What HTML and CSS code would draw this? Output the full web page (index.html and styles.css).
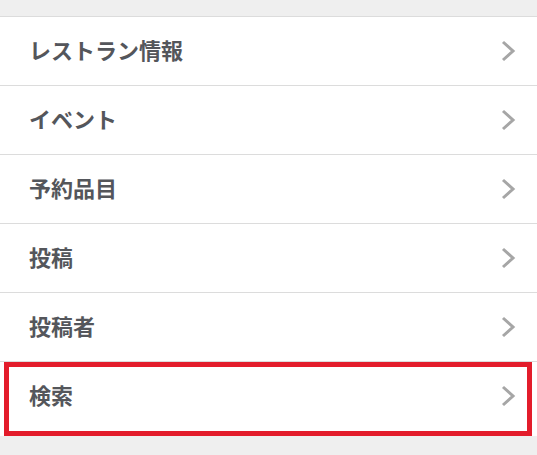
FILE: index.html
```html
<!DOCTYPE html>
<html lang="ja">
<head>
<meta charset="utf-8">
<link rel="stylesheet" href="styles.css">
</head>
<body>
<div class="page">
  <ul class="menu">
    <li class="item"><span class="label">レストラン情報</span><svg class="chev" viewBox="0 0 16 22"><path d="M3 2 L13 11 L3 20"/></svg></li>
    <li class="item"><span class="label">イベント</span><svg class="chev" viewBox="0 0 16 22"><path d="M3 2 L13 11 L3 20"/></svg></li>
    <li class="item"><span class="label">予約品目</span><svg class="chev" viewBox="0 0 16 22"><path d="M3 2 L13 11 L3 20"/></svg></li>
    <li class="item"><span class="label">投稿</span><svg class="chev" viewBox="0 0 16 22"><path d="M3 2 L13 11 L3 20"/></svg></li>
    <li class="item"><span class="label">投稿者</span><svg class="chev" viewBox="0 0 16 22"><path d="M3 2 L13 11 L3 20"/></svg></li>
    <li class="item item-highlight"><span class="label">検索</span><svg class="chev" viewBox="0 0 16 22"><path d="M3 2 L13 11 L3 20"/></svg><span class="mark"></span></li>
  </ul>
</div>
</body>
</html>
```
FILE: styles.css
```css
html, body {
  margin: 0;
  padding: 0;
  background: #efefef;
}
.page {
  padding-top: 16px;
  font-family: "Noto Sans CJK JP", "Noto Sans", sans-serif;
}
.menu {
  list-style: none;
  margin: 0;
  padding: 0 0 6px 0;
  background: #fff;
  border-top: 1px solid #dcdcdc;
}
.item {
  position: relative;
  height: 68px;
  display: flex;
  align-items: center;
  justify-content: space-between;
  padding: 0 21px 0 29px;
  border-bottom: 1px solid #dcdcdc;
}
.item:last-child {
  border-bottom: none;
}
.label {
  font-size: 22px;
  font-weight: 700;
  color: #54565b;
  line-height: 1;
  padding-bottom: 4px;
}
.chev {
  width: 16px;
  height: 22px;
  fill: none;
  stroke: #a6a6a6;
  stroke-width: 3;
}
.mark {
  position: absolute;
  left: 4px;
  right: 5px;
  top: 0;
  bottom: -6px;
  border: 5px solid #e31c2b;
}
```
